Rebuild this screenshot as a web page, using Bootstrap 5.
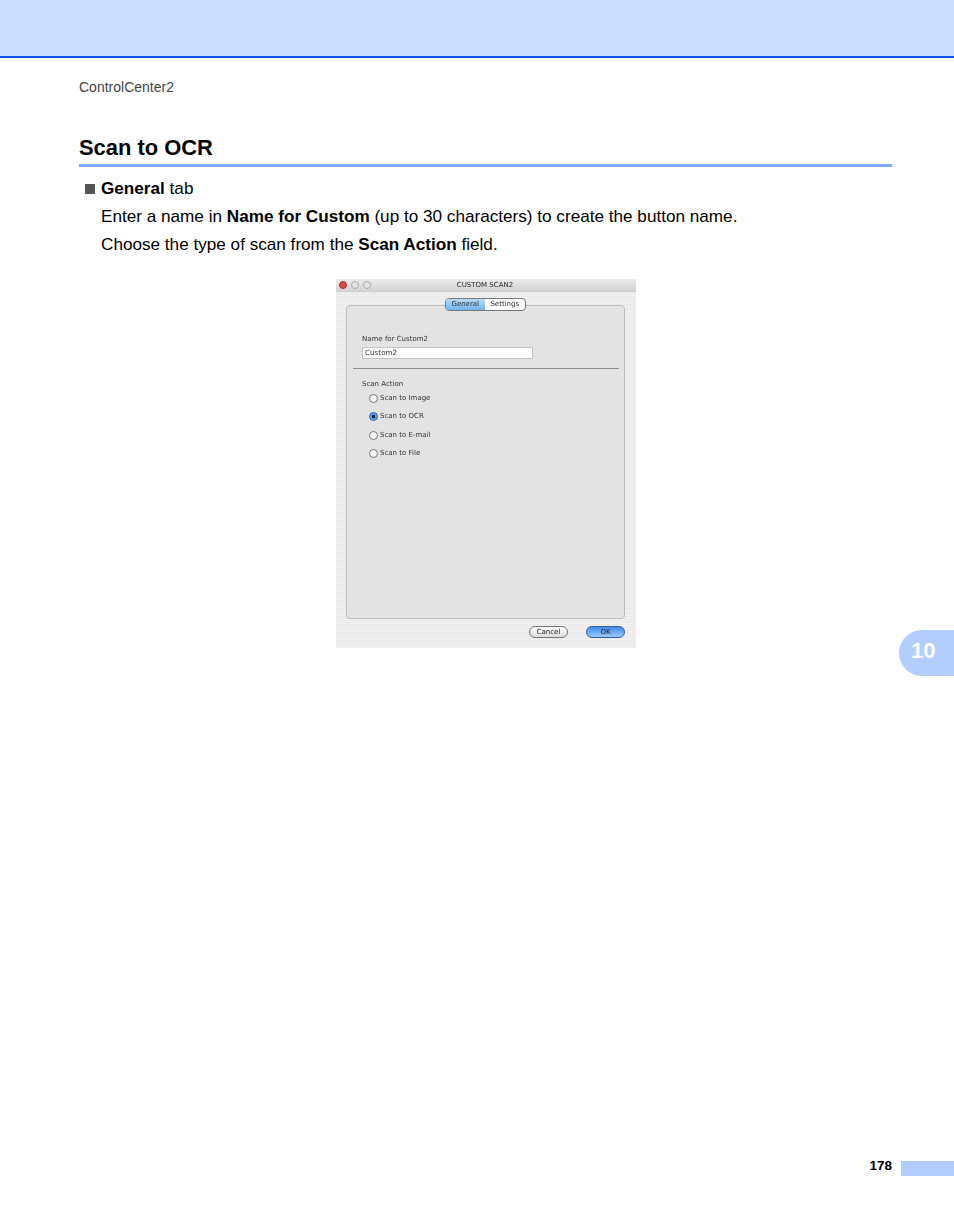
<!DOCTYPE html>
<html lang="en">
<head>
<meta charset="utf-8">
<title>Scan to OCR</title>
<link href="https://cdn.jsdelivr.net/npm/bootstrap@5.3.0/dist/css/bootstrap.min.css" rel="stylesheet">
<style>
html,body{height:100%;}
body{font-family:"Liberation Sans",Arial,sans-serif;background:#fff;color:#000;overflow:hidden;}
.pg{height:1232px;position:relative;}
.topband{height:58px;background:#cadcff;border-bottom:2px solid #0b50e6;}
.crumb{font-size:14px;line-height:15px;color:#444;padding:22px 0 0 79px;height:52px;}
.sect{margin:0 62px 0 79px;border-bottom:3px solid #7fa8fb;height:57px;padding-top:25px;font-size:21.9px;line-height:26px;font-weight:700;}
.bodytxt{margin:0 62px 0 101px;font-size:17.15px;line-height:28px;padding-top:7px;position:relative;}
.sq{position:absolute;left:-16px;top:17px;width:10px;height:10px;background:#555;}
.shotwrap{padding:21px 62px 0 80px;}
.win{width:300px;height:369px;background:repeating-linear-gradient(#f1f1f1 0 1px,#e9e9e9 1px 2px);font-family:"DejaVu Sans",sans-serif;color:#333;filter:blur(.5px);}
.wtitle{height:13px;background:linear-gradient(#ececec,#d0d0d0);font-size:7px;line-height:13px;position:relative;text-align:center;color:#222;padding-right:2px;}
.dot{width:8px;height:8px;border-radius:50%;background:#e4e4e4;border:1px solid #aaa;}
.dot-r{background:#d84a4a;border-color:#a33;}
.dots{position:absolute;left:3px;top:2px;}
.segrow{margin-top:6px;padding-left:1px;padding-right:3px;}
.seg{width:81px;height:13px;border:1px solid #777;border-radius:4px;background:#fff;font-size:7px;line-height:11px;position:relative;z-index:1;overflow:hidden;}
.seg span{flex:1 1 0;text-align:center;}
.seg .on{background:linear-gradient(#b9dcf8,#6db2f2);}
.panel{margin:-6px 11px 0 10px;height:314px;background:#e3e3e3;border:1px solid #bcbcbc;border-radius:4px;padding:29px 5px 0 15px;font-size:7px;line-height:9px;}
.fld{width:171px;height:12px;background:#fff;border:1px solid #c4c4c4;margin-top:3px;padding-left:2px;line-height:10px;font-size:7.2px;}
.rule{height:1px;background:#8e8e8e;margin:9px 0 11px -9px;}
.cap{margin-bottom:5px;}
.rad{height:18.3px;padding-left:7px;gap:2px;}
.radio{width:9px;height:9px;border-radius:50%;border:1px solid #777;background:#f4f4f4;flex:none;}
.radio.sel{background:radial-gradient(circle,#123 0 1.4px,#5ba2ea 1.8px);border-color:#2a5f9f;}
.btnrow{margin-top:7px;gap:18px;padding-right:11px;}
.mbtn{height:12px;width:39px;border-radius:6px;border:1px solid #777;background:linear-gradient(#fff,#ddd);font-size:7px;line-height:10px;text-align:center;color:#222;}
.mbtn.def{background:linear-gradient(#3f8cec,#9cc8f7);border-color:#335d9f;}
.foot{position:absolute;left:0;right:0;top:1161px;height:15px;gap:9px;}
.pnum{font-size:13.5px;font-weight:700;line-height:9px;}
.fbar{width:53px;height:15px;background:#b3cdff;}
.chap{position:absolute;right:0;top:630px;width:55px;height:46px;border-radius:23px 0 0 23px;background:#b3cdff;color:#fff;font-size:22px;font-weight:700;line-height:42px;padding-left:12px;}
</style>
</head>
<body>
<div class="pg">
  <div class="topband"></div>
  <div class="crumb">ControlCenter2</div>
  <div class="sect">Scan to OCR</div>
  <div class="bodytxt">
    <i class="sq"></i>
    <div><b>General</b> tab</div>
    <div>Enter a name in <b>Name for Custom</b> (up to 30 characters) to create the button name.</div>
    <div>Choose the type of scan from the <b>Scan Action</b> field.</div>
  </div>
  <div class="shotwrap d-flex justify-content-center">
    <div class="win">
      <div class="wtitle">CUSTOM SCAN2
        <div class="dots d-flex gap-1"><i class="dot dot-r"></i><i class="dot"></i><i class="dot"></i></div>
      </div>
      <div class="segrow d-flex justify-content-center"><div class="seg d-flex"><span class="on">General</span><span>Settings</span></div></div>
      <div class="panel">
        <div>Name for Custom2</div>
        <div class="fld">Custom2</div>
        <div class="rule"></div>
        <div class="cap">Scan Action</div>
        <div class="rad d-flex align-items-start"><i class="radio"></i><span>Scan to Image</span></div>
        <div class="rad d-flex align-items-start"><i class="radio sel"></i><span>Scan to OCR</span></div>
        <div class="rad d-flex align-items-start"><i class="radio"></i><span>Scan to E-mail</span></div>
        <div class="rad d-flex align-items-start"><i class="radio"></i><span>Scan to File</span></div>
      </div>
      <div class="btnrow d-flex justify-content-end"><div class="mbtn">Cancel</div><div class="mbtn def">OK</div></div>
    </div>
  </div>
  <div class="chap">10</div>
  <div class="foot d-flex justify-content-end align-items-start"><span class="pnum">178</span><div class="fbar"></div></div>
</div>
<script src="https://cdn.jsdelivr.net/npm/bootstrap@5.3.0/dist/js/bootstrap.bundle.min.js"></script>
</body>
</html>
